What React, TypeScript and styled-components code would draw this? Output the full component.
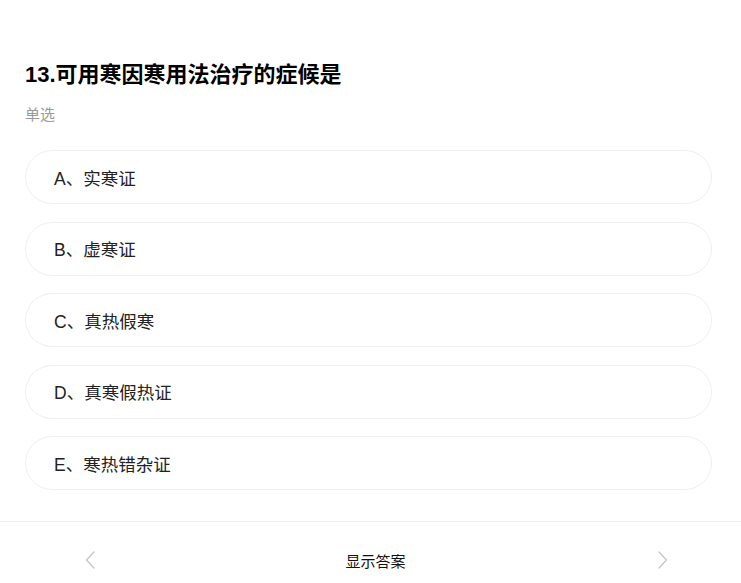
import React from "react";
import styled, { createGlobalStyle } from "styled-components";

const Global = createGlobalStyle`
  html, body { margin: 0; padding: 0; background: #fff; }
  body { font-family: "Liberation Sans", Arial, "Noto Sans CJK SC", sans-serif; }
`;

const Page = styled.div`
  display: flex;
  flex-direction: column;
`;

const Content = styled.div`
  padding: 60px 29px 0 25px;
  display: flex;
  flex-direction: column;
`;

const Title = styled.h1`
  margin: 0;
  font-size: 22px;
  line-height: 30px;
  font-weight: bold;
  color: #000;
`;

const TypeLabel = styled.div`
  margin-top: 15px;
  font-size: 15px;
  line-height: 20px;
  color: #9a9a9a;
`;

const Options = styled.div`
  margin-top: 25px;
  display: flex;
  flex-direction: column;
  gap: 17.5px;
`;

const Option = styled.div`
  height: 52px;
  border: 1px solid #efefef;
  border-radius: 27px;
  display: flex;
  align-items: center;
  padding-left: 28px;
  font-size: 17.5px;
  color: #222;
`;

const Footer = styled.div`
  margin-top: 31px;
  border-top: 1px solid #eeeeee;
  height: 76px;
  display: flex;
  align-items: center;
  justify-content: space-between;
  padding: 0 70px 0 82px;
`;

const Arrow = styled.button`
  border: 0;
  background: none;
  padding: 0;
  width: 16px;
  height: 20px;
  display: flex;
  align-items: center;
  justify-content: center;
`;

const ShowAnswer = styled.div`
  font-size: 15px;
  color: #111;
  margin-right: 2px;
`;

const Chevron = ({ dir }: { dir: "left" | "right" }) => (
  <svg width="12" height="18" viewBox="0 0 12 18" fill="none">
    <path
      d={dir === "left" ? "M10 1 L2.5 9 L10 17" : "M2 1 L9.5 9 L2 17"}
      stroke="#c8c8c8"
      strokeWidth="1.4"
      strokeLinecap="round"
      strokeLinejoin="round"
    />
  </svg>
);

const options = ["A、实寒证", "B、虚寒证", "C、真热假寒", "D、真寒假热证", "E、寒热错杂证"];

export default function App() {
  return (
    <Page>
      <Global />
      <Content>
        <Title>13.可用寒因寒用法治疗的症候是</Title>
        <TypeLabel>单选</TypeLabel>
        <Options>
          {options.map((o) => (
            <Option key={o}>{o}</Option>
          ))}
        </Options>
      </Content>
      <Footer>
        <Arrow>
          <Chevron dir="left" />
        </Arrow>
        <ShowAnswer>显示答案</ShowAnswer>
        <Arrow>
          <Chevron dir="right" />
        </Arrow>
      </Footer>
    </Page>
  );
}
